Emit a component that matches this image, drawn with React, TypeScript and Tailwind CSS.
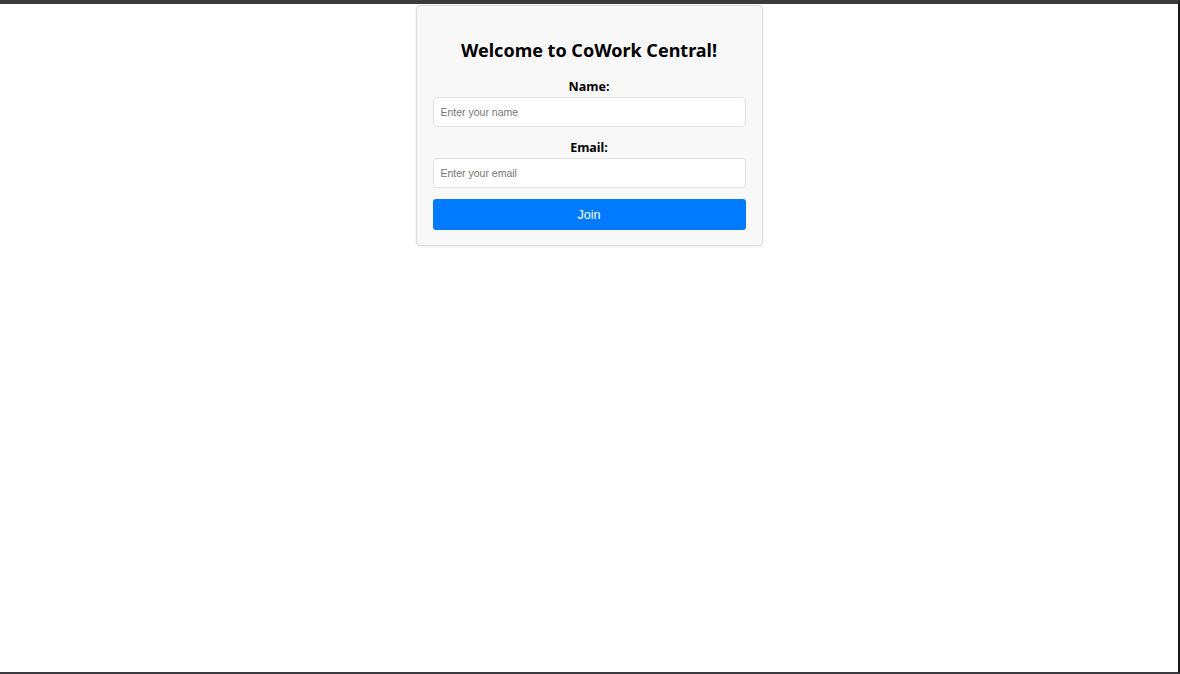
import React from "react";

export default function App() {
  return (
    <div className="w-[1180px] h-[674px] bg-white border-t-4 border-t-[#3b3b3d] border-r-2 border-r-[#1a1a1a] border-b-2 border-b-[#3b3b3d] flex flex-col items-center overflow-hidden box-border">
      <div className="mt-[1px] w-[347px] bg-[#f8f8f8] border border-[#dcdcdc] rounded-[4px] shadow-[0_1px_3px_rgba(0,0,0,0.08)] px-4 pt-[32px] pb-[15px] flex flex-col" style={{ fontFamily: '"Noto Sans", "Open Sans", sans-serif' }}>
        <h2 className="text-[18px] font-bold text-black text-center leading-[24px] mb-[17px]">
          Welcome to CoWork Central!
        </h2>
        <label className="text-[12.5px] font-bold text-black text-center leading-[16px] mb-[2px]">Name:</label>
        <input
          className="h-[30px] w-full bg-white border border-[#e2e2e2] rounded-[4px] px-[7px] text-[10.5px] placeholder:text-[#757575] outline-none"
          style={{ fontFamily: '"Liberation Sans", Arial, sans-serif' }}
          placeholder="Enter your name"
        />
        <label className="text-[12.5px] font-bold text-black text-center leading-[16px] mt-[13px] mb-[2px]">Email:</label>
        <input
          className="h-[30px] w-full bg-white border border-[#e2e2e2] rounded-[4px] px-[7px] text-[10.5px] placeholder:text-[#757575] outline-none"
          style={{ fontFamily: '"Liberation Sans", Arial, sans-serif' }}
          placeholder="Enter your email"
        />
        <button
          className="mt-[11px] h-[31px] w-full bg-[#007bff] text-white rounded-[3px] text-[12.5px] pt-[1px]"
          style={{ fontFamily: '"Liberation Sans", Arial, sans-serif' }}
        >
          Join
        </button>
      </div>
    </div>
  );
}
